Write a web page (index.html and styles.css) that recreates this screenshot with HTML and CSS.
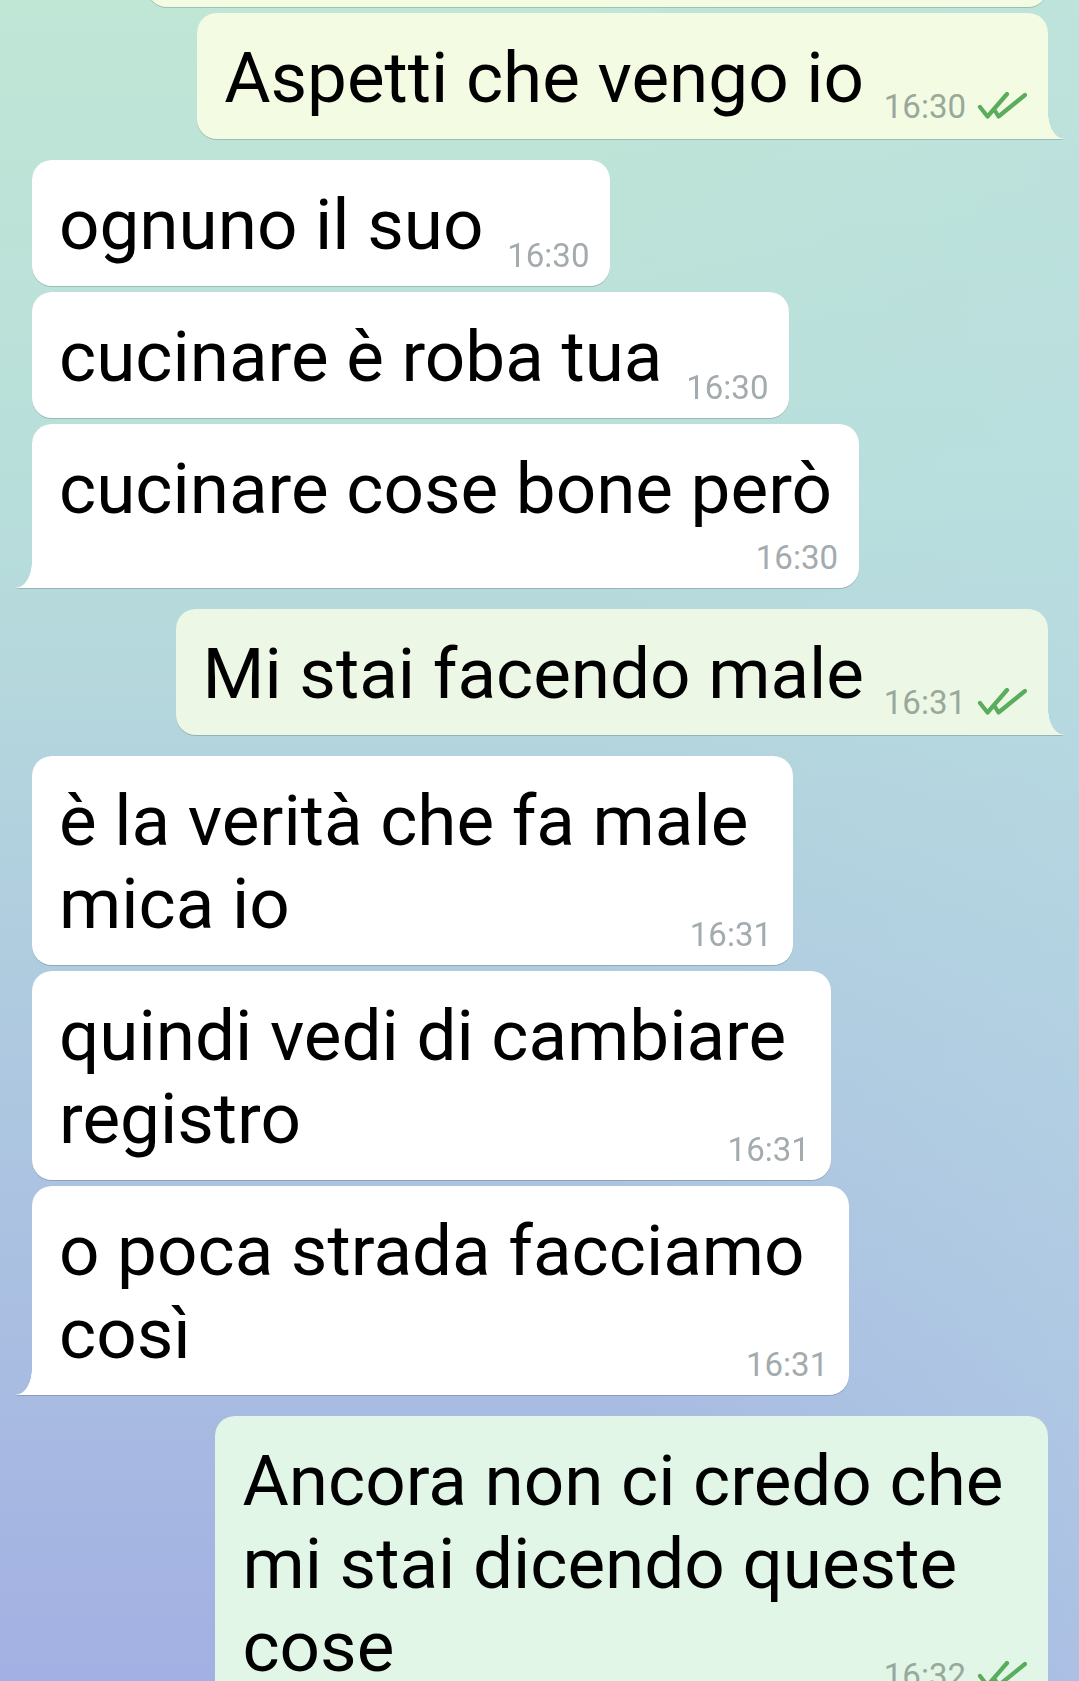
FILE: index.html
```html
<!DOCTYPE html>
<html lang="it">
<head>
    <meta charset="UTF-8">
    <meta name="viewport" content="width=device-width, initial-scale=1.0">
    <title>Chat</title>
    <link rel="stylesheet" href="styles.css">
</head>
<body>
    <div class="chat">
        <div class="group out">
            <div class="msg out cut tone-1"></div>
            <div class="msg out tail tone-1">
                <p class="text">Aspetti che vengo io</p>
                <span class="meta">16:30<svg class="ticks" viewBox="0 0 50 27"><path d="M3 15 L10.5 24.5 L30 2"/><path d="M18.5 19.5 L21.5 24.5 L48 3"/></svg></span>
            </div>
        </div>

        <div class="group in">
            <div class="msg in">
                <p class="text">ognuno il suo</p>
                <span class="meta">16:30</span>
            </div>
            <div class="msg in">
                <p class="text">cucinare è roba tua</p>
                <span class="meta">16:30</span>
            </div>
            <div class="msg in tail stacked">
                <p class="text">cucinare cose bone però</p>
                <span class="meta">16:30</span>
            </div>
        </div>

        <div class="group out">
            <div class="msg out tail tone-2">
                <p class="text">Mi stai facendo male</p>
                <span class="meta">16:31<svg class="ticks" viewBox="0 0 50 27"><path d="M3 15 L10.5 24.5 L30 2"/><path d="M18.5 19.5 L21.5 24.5 L48 3"/></svg></span>
            </div>
        </div>

        <div class="group in">
            <div class="msg in">
                <p class="text">è la verità che fa male&nbsp;<br>mica io</p>
                <span class="meta">16:31</span>
            </div>
            <div class="msg in">
                <p class="text">quindi vedi di cambiare&nbsp;<br>registro</p>
                <span class="meta">16:31</span>
            </div>
            <div class="msg in tail">
                <p class="text">o poca strada facciamo&nbsp;<br>così</p>
                <span class="meta">16:31</span>
            </div>
        </div>

        <div class="group out">
            <div class="msg out tail tone-3">
                <p class="text">Ancora non ci credo che&nbsp;<br>mi stai dicendo queste&nbsp;<br>cose</p>
                <span class="meta">16:32<svg class="ticks" viewBox="0 0 50 27"><path d="M3 15 L10.5 24.5 L30 2"/><path d="M18.5 19.5 L21.5 24.5 L48 3"/></svg></span>
            </div>
        </div>
    </div>
</body>
</html>
```

FILE: styles.css
```css
body {
    margin: 0;
    padding: 0;
    font-family: Roboto, "Noto Sans", sans-serif;
    height: 100vh;
    overflow: hidden;
    background:
        linear-gradient(90deg, rgba(255,255,255,0) 55%, rgba(186,222,230,.35) 100%),
        linear-gradient(180deg, #c0e6d6 0%, #b8dedb 30%, #aec9e0 62%, #a3b0e3 100%);
}
.chat {
    display: flex;
    flex-direction: column;
    gap: 21px;
    padding: 0 31px 0 32px;
    margin-top: -119px;
}
.group {
    display: flex;
    flex-direction: column;
    gap: 6px;
}
.group.in {
    align-items: flex-start;
}
.group.out {
    align-items: flex-end;
}
.msg {
    display: grid;
    position: relative;
    padding: 23px 27px 20px;
    border-radius: 20px;
    background: #ffffff;
    filter: drop-shadow(0 1px 0.6px rgba(0,0,0,.17));
}
.msg.tone-1 {
    background: #f4fbe3;
}
.msg.tone-2 {
    background: #ecf8e5;
}
.msg.tone-3 {
    background: #e1f6e7;
}
.msg.cut {
    width: 847px;
    height: 83px;
}
.text {
    grid-area: 1 / 1;
    margin: 0;
    color: #000000;
    font-size: 71px;
    line-height: 83px;
}
.text::after {
    content: "";
    display: inline-block;
    width: 100px;
}
.msg.out .text::after {
    width: 157px;
}
.meta {
    grid-area: 1 / 1;
    align-self: end;
    justify-self: end;
    margin-right: -6px;
    font-size: 33px;
    line-height: 20px;
    color: #a3abae;
    white-space: nowrap;
}
.msg.out .meta {
    color: #98a99b;
}
.ticks {
    width: 50px;
    height: 27px;
    margin-left: 11px;
    vertical-align: -1px;
    fill: none;
    stroke: #5aad5c;
    stroke-width: 4.2;
    stroke-linecap: round;
    stroke-linejoin: round;
}
.msg.stacked .text::after {
    display: none;
}
.msg.stacked .meta {
    grid-area: 2 / 1;
    margin-top: 18px;
}
/* bubble tails */
.msg.tail.in {
    border-bottom-left-radius: 0;
}
.msg.tail.out {
    border-bottom-right-radius: 0;
}
.msg.tail::before {
    content: "";
    position: absolute;
    bottom: 0;
    width: 16px;
    height: 26px;
    background: inherit;
}
.msg.tail.in::before {
    left: -16px;
    -webkit-mask: radial-gradient(ellipse 16px 26px at 0 0, transparent 97%, #000 100%);
    mask: radial-gradient(ellipse 16px 26px at 0 0, transparent 97%, #000 100%);
}
.msg.tail.out::before {
    right: -16px;
    -webkit-mask: radial-gradient(ellipse 16px 26px at 100% 0, transparent 97%, #000 100%);
    mask: radial-gradient(ellipse 16px 26px at 100% 0, transparent 97%, #000 100%);
}
```
